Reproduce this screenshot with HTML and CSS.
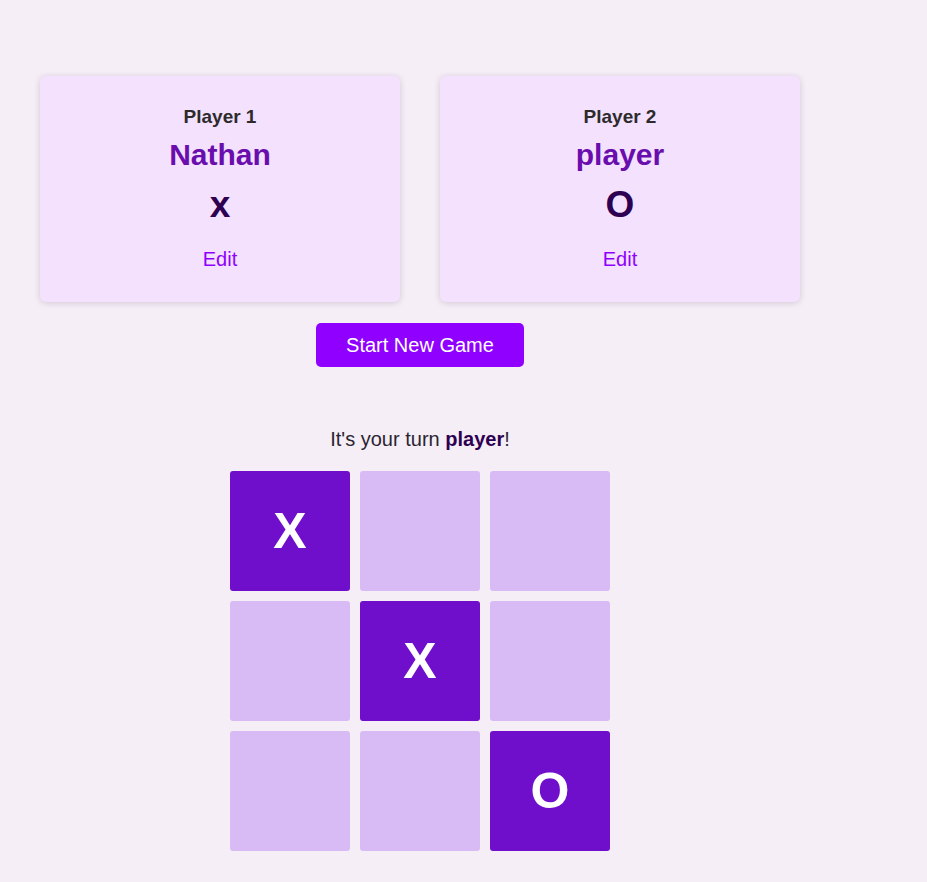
FILE: index.html
```html
<!DOCTYPE html>
<html lang="en">
<head>
<meta charset="utf-8">
<title>Tic Tac Toe</title>
<link rel="stylesheet" href="styles.css">
</head>
<body>
<main class="page">
  <section class="players">
    <div class="card">
      <h3 class="card-label">Player 1</h3>
      <div class="card-name">Nathan</div>
      <div class="card-symbol">x</div>
      <button class="edit-btn">Edit</button>
    </div>
    <div class="card">
      <h3 class="card-label">Player 2</h3>
      <div class="card-name">player</div>
      <div class="card-symbol">O</div>
      <button class="edit-btn">Edit</button>
    </div>
  </section>
  <div class="actions">
    <button class="start-btn">Start New Game</button>
  </div>
  <p class="turn">It's your turn <strong>player</strong>!</p>
  <div class="board-wrap">
    <div class="board">
      <div class="cell filled">X</div>
      <div class="cell"></div>
      <div class="cell"></div>
      <div class="cell"></div>
      <div class="cell filled">X</div>
      <div class="cell"></div>
      <div class="cell"></div>
      <div class="cell"></div>
      <div class="cell filled">O</div>
    </div>
  </div>
</main>
</body>
</html>
```
FILE: styles.css
```css
* { box-sizing: border-box; }
html, body {
  margin: 0;
  padding: 0;
  background: #f5eef6;
  font-family: "Liberation Sans", Arial, sans-serif;
}
.page {
  width: 840px;
  padding: 76px 40px 0 40px;
}
.players {
  display: flex;
  gap: 40px;
}
.card {
  width: 360px;
  height: 226px;
  background: #f3e1fd;
  border-radius: 6px;
  box-shadow: 0 1px 6px rgba(60, 20, 80, 0.18);
  padding-top: 29px;
  display: flex;
  flex-direction: column;
  align-items: center;
}
.card-label {
  margin: 0;
  font-size: 19px;
  line-height: 24px;
  font-weight: bold;
  color: #2e2a2c;
}
.card-name {
  margin-top: 8px;
  font-size: 30px;
  line-height: 36px;
  font-weight: bold;
  color: #6a0dad;
}
.card-symbol {
  margin-top: 10px;
  font-size: 37px;
  line-height: 44px;
  font-weight: bold;
  color: #2e0052;
}
.edit-btn {
  margin-top: 20px;
  background: none;
  border: none;
  padding: 0;
  font-family: inherit;
  font-size: 20px;
  line-height: 24px;
  color: #8f00ff;
  cursor: pointer;
}
.actions {
  display: flex;
  justify-content: center;
  margin-top: 21px;
}
.start-btn {
  background: #8f00ff;
  color: #ffffff;
  border: none;
  border-radius: 5px;
  font-family: inherit;
  font-size: 20px;
  line-height: 24px;
  padding: 10px 30px;
  cursor: pointer;
}
.turn {
  margin: 60px 0 0 0;
  text-align: center;
  font-size: 20px;
  line-height: 24px;
  color: #2a2530;
}
.turn strong {
  color: #2e0052;
}
.board-wrap {
  display: flex;
  justify-content: center;
  margin-top: 20px;
}
.board {
  display: grid;
  grid-template-columns: repeat(3, 120px);
  grid-auto-rows: 120px;
  gap: 10px;
}
.cell {
  background: #d8bbf5;
  border-radius: 3px;
  display: flex;
  align-items: center;
  justify-content: center;
  font-size: 50px;
  font-weight: bold;
  color: #ffffff;
}
.cell.filled {
  background: #6f0ecb;
}
```
